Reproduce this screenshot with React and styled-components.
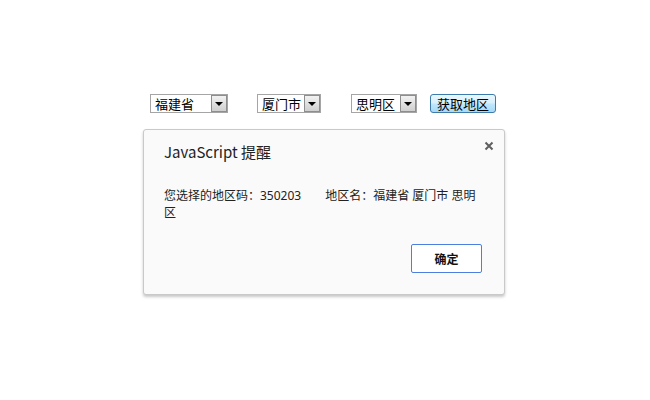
import React from "react";
import styled, { createGlobalStyle } from "styled-components";

const Global = createGlobalStyle`
  html, body { margin: 0; padding: 0; background: #ffffff; }
  body { font-family: "Noto Sans CJK SC", "Noto Sans", sans-serif; text-spacing-trim: space-all; }
`;

const Page = styled.div`
  position: relative;
  width: 650px;
  height: 400px;
  padding: 94px 0 0 150px;
  box-sizing: border-box;
`;

const Toolbar = styled.div`
  display: flex;
  align-items: center;
`;

const SelectBox = styled.div`
  display: flex;
  width: ${(p) => p.$w}px;
  height: 19px;
  margin-right: ${(p) => p.$gap}px;
  border: 1px solid #a5a5a5;
  box-sizing: border-box;
  background: #fff;
`;

const SelectValue = styled.div`
  flex: 1;
  padding-left: 4px;
  font-family: "Noto Sans CJK SC", sans-serif;
  font-size: 13px;
  line-height: 17px;
  color: #000;
  white-space: nowrap;
  overflow: hidden;
`;

const ArrowButton = styled.div`
  width: 16px;
  height: 17px;
  box-sizing: border-box;
  border: 1px solid #8e8e8e;
  background: linear-gradient(#f2f2f2, #cfcfcf);
  display: flex;
  align-items: center;
  justify-content: center;
  &::after {
    content: "";
    display: block;
    border-left: 4px solid transparent;
    border-right: 4px solid transparent;
    border-top: 4px solid #000;
    margin-top: 1px;
  }
`;

const FetchButton = styled.button`
  width: 66px;
  height: 19px;
  padding: 0;
  border: 1px solid #3d7bad;
  border-radius: 3px;
  background: linear-gradient(#eaf6fd 0%, #d9f0fc 45%, #bee6fd 55%, #a7d9f5 100%);
  font-family: "Noto Sans CJK SC", sans-serif;
  font-size: 13px;
  line-height: 17px;
  color: #000;
  box-sizing: border-box;
`;

const Dialog = styled.div`
  position: absolute;
  left: 143px;
  top: 129px;
  width: 362px;
  height: 166px;
  box-sizing: border-box;
  background: #fafafa;
  border: 1px solid #c9c9c9;
  border-radius: 3px;
  box-shadow: 0 2px 3px rgba(0, 0, 0, 0.22);
  padding: 12px 22px 0 20px;
  display: flex;
  flex-direction: column;
`;

const Close = styled.div`
  position: absolute;
  right: 10px;
  top: 11px;
  width: 10px;
  height: 10px;
  display: flex;
`;

const Title = styled.div`
  font-family: "Noto Sans CJK SC", "Noto Sans", sans-serif;
  font-size: 15px;
  line-height: 20px;
  color: #222;
`;

const Message = styled.div`
  margin-top: 25px;
  width: 318px;
  font-family: "Noto Sans", "Noto Sans CJK SC", sans-serif;
  font-size: 12px;
  line-height: 17px;
  color: #222;
  text-spacing-trim: space-all;
`;

const Spacer = styled.span`
  display: inline-block;
  width: 24px;
`;

const Footer = styled.div`
  margin-top: 23px;
  display: flex;
  justify-content: flex-end;
`;

const OkButton = styled.button`
  width: 71px;
  height: 29px;
  border: 1px solid #4d7fe0;
  border-radius: 2px;
  background: #ffffff;
  font-family: "Noto Sans CJK SC", sans-serif;
  font-weight: bold;
  font-size: 12px;
  color: #111;
  padding: 0;
  box-sizing: border-box;
`;

function Select({ value, w, gap }) {
  return (
    <SelectBox $w={w} $gap={gap}>
      <SelectValue>{value}</SelectValue>
      <ArrowButton />
    </SelectBox>
  );
}

export default function App() {
  return (
    <>
      <Global />
      <Page>
        <Toolbar>
          <Select value="福建省" w={78} gap={29} />
          <Select value="厦门市" w={64} gap={30} />
          <Select value="思明区" w={66} gap={13} />
          <FetchButton>获取地区</FetchButton>
        </Toolbar>
        <Dialog>
          <Close>
            <svg width="10" height="10" viewBox="0 0 10 10">
              <path d="M1.5 1.5 L8.5 8.5 M8.5 1.5 L1.5 8.5" stroke="#5f5f5f" strokeWidth="2" />
            </svg>
          </Close>
          <Title>JavaScript 提醒</Title>
          <Message>
            您选择的地区码：350203<Spacer />地区名：福建省 厦门市 思明区
          </Message>
          <Footer>
            <OkButton>确定</OkButton>
          </Footer>
        </Dialog>
      </Page>
    </>
  );
}
